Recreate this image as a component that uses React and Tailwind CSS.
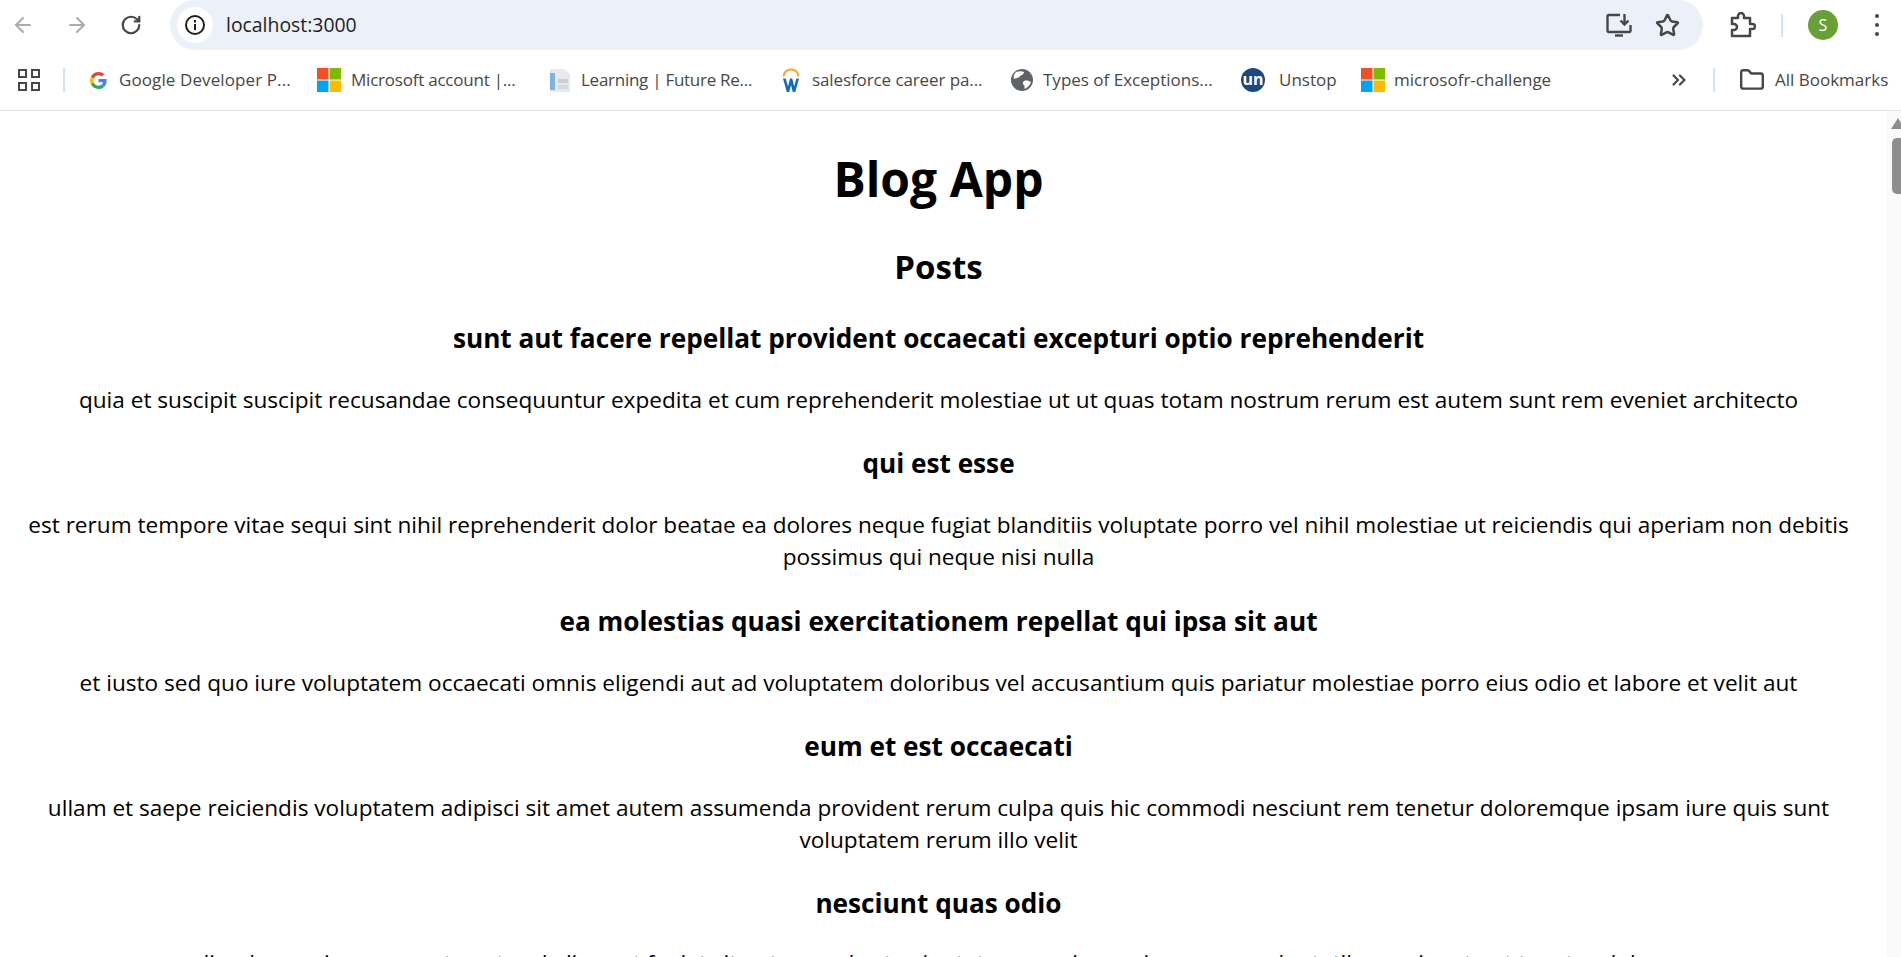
import React from 'react';
import { ArrowLeft, ArrowRight, RotateCw, Star, Folder, ChevronsRight } from 'lucide-react';

const posts = [
  ['sunt aut facere repellat provident occaecati excepturi optio reprehenderit', 'quia et suscipit suscipit recusandae consequuntur expedita et cum reprehenderit molestiae ut ut quas totam nostrum rerum est autem sunt rem eveniet architecto'],
  ['qui est esse', 'est rerum tempore vitae sequi sint nihil reprehenderit dolor beatae ea dolores neque fugiat blanditiis voluptate porro vel nihil molestiae ut reiciendis qui aperiam non debitis possimus qui neque nisi nulla'],
  ['ea molestias quasi exercitationem repellat qui ipsa sit aut', 'et iusto sed quo iure voluptatem occaecati omnis eligendi aut ad voluptatem doloribus vel accusantium quis pariatur molestiae porro eius odio et labore et velit aut'],
  ['eum et est occaecati', 'ullam et saepe reiciendis voluptatem adipisci sit amet autem assumenda provident rerum culpa quis hic commodi nesciunt rem tenetur doloremque ipsam iure quis sunt voluptatem rerum illo velit'],
  ['nesciunt quas odio', 'repudiandae veniam quaerat sunt sed alias aut fugiat sit autem sed est voluptatem omnis possimus esse voluptatibus quis est aut tenetur dolor neque'],
];

const MsLogo = () => (
  <svg width="24" height="24" viewBox="0 0 24 24" className="shrink-0">
    <rect width="11.5" height="11.5" fill="#f25022" />
    <rect x="12.5" width="11.5" height="11.5" fill="#7fba00" />
    <rect y="12.5" width="11.5" height="11.5" fill="#00a4ef" />
    <rect x="12.5" y="12.5" width="11.5" height="11.5" fill="#ffb900" />
  </svg>
);

const GoogleLogo = () => (
  <svg width="17" height="17" viewBox="0 0 48 48" className="shrink-0">
    <path fill="#EA4335" d="M24 9.5c3.5 0 6.700 1.300 9.100 3.500l6.800-6.800C35.800 2.400 30.300 0 24 0 14.600 0 6.500 5.400 2.600 13.200l7.900 6.100C12.400 13.600 17.700 9.500 24 9.500z" />
    <path fill="#4285F4" d="M46.900 24.500c0-1.600-.1-3.100-.4-4.500H24v9h12.900c-.6 3-2.200 5.500-4.700 7.200l7.700 6c4.500-4.200 7-10.300 7-17.700z" />
    <path fill="#FBBC05" d="M10.500 28.700c-.5-1.400-.8-3-.8-4.700s.3-3.200.8-4.700l-7.900-6.100C.9 16.500 0 20.100 0 24s.9 7.500 2.600 10.800l7.900-6.100z" />
    <path fill="#34A853" d="M24 48c6.500 0 11.900-2.100 15.900-5.800l-7.700-6c-2.100 1.400-4.900 2.300-8.200 2.300-6.300 0-11.600-4.200-13.500-9.900l-7.900 6.100C6.500 42.600 14.600 48 24 48z" />
  </svg>
);

const DocIcon = () => (
  <svg width="22" height="24" viewBox="0 0 22 24" className="shrink-0">
    <path d="M1 1h14l6 5v18H1z" fill="#e6eaee" />
    <rect x="1" y="5" width="5" height="17" fill="#7fb2dd" />
    <rect x="9" y="11" width="10" height="4" fill="#c9ced3" />
    <rect x="9" y="17" width="10" height="4" fill="#d5d9dd" />
  </svg>
);

const WorkdayIcon = () => (
  <svg width="18" height="24" viewBox="0 0 18 24" className="shrink-0">
    <path d="M1.500 8.500a7.500 7 0 0 1 15 0" fill="none" stroke="#f5a623" strokeWidth="2" />
    <path d="M1 10.500 4.800 24h2.400L9 17l1.800 7h2.400L17 10.500h-2.600l-2.200 8-2-8H8l-2 8-2.300-8z" fill="#0f6cb6" />
  </svg>
);

const GlobeIcon = () => (
  <svg width="22" height="24" viewBox="0 0 22 22" className="shrink-0">
    <circle cx="11" cy="11" r="11" fill="#5f6368" />
    <path d="M5 3c3-1 6-1 8 0 0 2-2 3-4 4-1 2-3 2-6 3-1-2 0-5 2-7zM13 12c3-1 5 0 7 1-1 3-3 5-6 7-1-2 0-3-1-4-2-1-1-3 0-4z" fill="#fff" />
  </svg>
);

const UnstopIcon = () => (
  <div className="flex h-[24px] w-[24px] shrink-0 items-center justify-center rounded-full bg-[#1c4980] pb-[2px] text-[16px] font-bold leading-none text-white">un</div>
);

const Bookmark = ({ icon, label, className, textClass = '' }) => (
  <div className={`flex shrink-0 items-center ${className}`}>
    {icon}
    <span className={`whitespace-nowrap text-[17px] text-[#474747] ${textClass}`}>{label}</span>
  </div>
);

const Toolbar = () => (
  <div className="flex h-[50px] items-center bg-white">
    <ArrowLeft size={24} strokeWidth={2} className="ml-[11px] text-[#a9abad]" />
    <ArrowRight size={24} strokeWidth={2} className="ml-[30px] text-[#a9abad]" />
    <RotateCw size={22} strokeWidth={2.400} className="ml-[31px] text-[#474747]" />
    <div className="ml-[28px] flex h-[50px] w-[1533px] items-center rounded-[25px] bg-[#ebf0f9] pr-[25px]">
      <div className="ml-[7px] flex h-[36px] w-[36px] items-center justify-center rounded-full bg-white">
        <svg width="22" height="22" viewBox="0 0 22 22" fill="none" stroke="#1f1f1f" strokeWidth="2">
          <circle cx="11" cy="11" r="9" />
          <path d="M11 10v6M11 6v2.400" />
        </svg>
      </div>
      <span className="ml-[13px] text-[19.400px] text-[#1f1f1f]">localhost:3000</span>
      <div className="ml-auto flex items-center gap-[23px]">
        <svg width="26" height="24" viewBox="0 0 26 24" fill="none" stroke="#474747" strokeWidth="2.400">
          <path d="M14 2H3a1.500 1.500 0 0 0-1.500 1.500v14A1.500 1.500 0 0 0 3 19h20a1.500 1.500 0 0 0 1.500-1.500V12" />
          <path d="M9 22.500h8" />
          <path d="M18.500 1v10M14.500 7.500l4 4 4-4" />
        </svg>
        <Star size={25} strokeWidth={2.400} className="mr-[-2px] text-[#474747]" />
      </div>
    </div>
    <svg width="26" height="26" viewBox="0 0 26 26" fill="none" stroke="#474747" strokeWidth="2.500" className="ml-[27px]">
      <path d="M2 6h6V4a3 3 0 0 1 6 0v2h6v6h2.500a2 2 0 0 1 0 5H20v7H2v-6h2a3 3 0 0 0 0-6H2z" strokeLinejoin="round" />
    </svg>
    <div className="ml-[25px] h-[23px] w-[2px] bg-[#d3e3fd]" />
    <div className="ml-[25px] flex h-[30px] w-[30px] items-center justify-center rounded-full bg-[#689f38] text-[16px] text-white">S</div>
    <div className="ml-[37px] flex flex-col gap-[5px]">
      <span className="h-[4px] w-[4px] rounded-full bg-[#474747]" />
      <span className="h-[4px] w-[4px] rounded-full bg-[#474747]" />
      <span className="h-[4px] w-[4px] rounded-full bg-[#474747]" />
    </div>
  </div>
);

const BookmarksBar = () => (
  <div className="flex h-[61px] items-center border-b border-[#e3e3e3] bg-white">
    <div className="ml-[18px] grid grid-cols-2 gap-[4px]">
      <span className="h-[9px] w-[9px] border-2 border-[#474747]" />
      <span className="h-[9px] w-[9px] border-2 border-[#474747]" />
      <span className="h-[9px] w-[9px] border-2 border-[#474747]" />
      <span className="h-[9px] w-[9px] border-2 border-[#474747]" />
    </div>
    <div className="ml-[23px] h-[24px] w-[2px] bg-[#d3e3fd]" />
    <Bookmark className="ml-[25px] w-[209px] gap-[12px]" textClass="tracking-[0.1px]" icon={<GoogleLogo />} label="Google Developer P..." />
    <Bookmark className="ml-[18px] w-[198px] gap-[10px]" textClass="tracking-[-0.22px]" icon={<MsLogo />} label="Microsoft account |..." />
    <Bookmark className="ml-[34px] w-[203px] gap-[10px]" textClass="tracking-[-0.27px]" icon={<DocIcon />} label="Learning | Future Re..." />
    <Bookmark className="ml-[30px] w-[199px] gap-[12px]" textClass="tracking-[-0.1px]" icon={<WorkdayIcon />} label="salesforce career pa..." />
    <Bookmark className="ml-[30px] w-[200px] gap-[10px]" icon={<GlobeIcon />} label="Types of Exceptions..." />
    <Bookmark className="ml-[30px] w-[95px] gap-[14px]" icon={<UnstopIcon />} label="Unstop" />
    <Bookmark className="ml-[25px] w-[191px] gap-[9px]" icon={<MsLogo />} label="microsofr-challenge" />
    <ChevronsRight size={22} strokeWidth={2.400} className="ml-[116px] text-[#474747]" />
    <div className="ml-[23px] h-[24px] w-[2px] bg-[#d3e3fd]" />
    <Folder size={26} strokeWidth={2.200} className="ml-[24px] shrink-0 text-[#474747]" />
    <span className="ml-[10px] whitespace-nowrap text-[17px] text-[#474747]">All Bookmarks</span>
  </div>
);

// thumb and arrow run off the window's right edge in the screenshot
const Scrollbar = () => (
  <div className="flex w-[14px] shrink-0 flex-col items-start overflow-hidden bg-[#fafafa] pl-[4px] pt-[7px]">
    <div className="h-0 w-0 shrink-0 border-x-[7px] border-b-[11px] border-x-transparent border-b-[#8e8e8e]" />
    <div className="ml-[1px] mt-[9px] h-[56px] w-[14px] shrink-0 rounded-[5px] bg-[#8e8e8e]" />
  </div>
);

export default function App() {
  return (
    <div className="h-screen w-full overflow-hidden bg-white font-['Open_Sans','Noto_Sans',sans-serif] text-black">
      <Toolbar />
      <BookmarksBar />
      <div className="flex h-[846px]">
        <main className="min-w-0 flex-1 overflow-hidden pl-[10px] pr-[20px] text-center">
          <h1 className="mt-[36px] text-[48px] font-bold leading-[64px]">Blog App</h1>
          <h2 className="mt-[32px] text-[33px] font-bold leading-[48px]">Posts</h2>
          {posts.map(([title, body]) => (
            <div key={title} className="last:[&>p]:mt-[24px]">
              <h3 className="mt-[29px] text-[26.200px] font-bold leading-[37px]">{title}</h3>
              <p className="mt-[26px] pt-[1px] text-[22.600px] leading-[32.200px]">{body}</p>
            </div>
          ))}
        </main>
        <Scrollbar />
      </div>
    </div>
  );
}
